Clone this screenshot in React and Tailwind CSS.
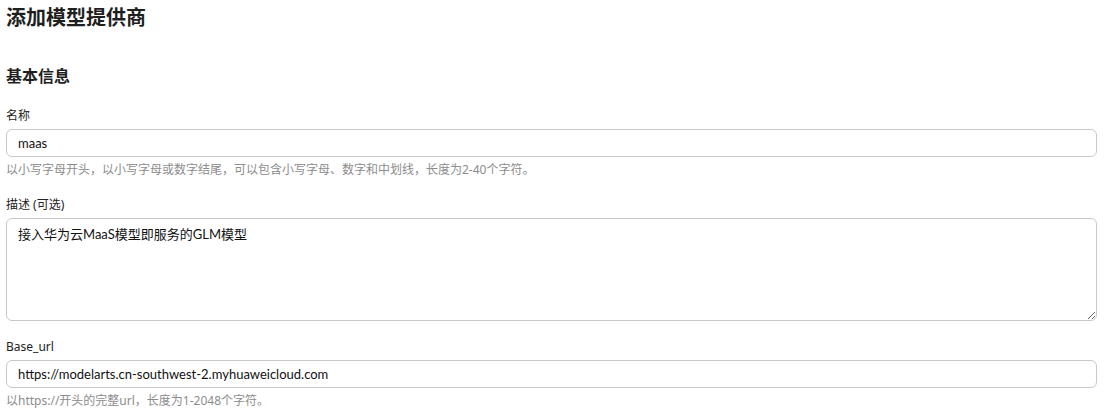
import React from "react";

const font = { fontFamily: '"Noto Sans", "Noto Sans CJK SC", sans-serif' };
const inputFont = { fontFamily: '"Lato", "Noto Sans CJK SC", sans-serif' };

export default function App() {
  return (
    <div className="bg-white w-[1112px] h-[416px] overflow-hidden pl-[6px] pr-[15px] pt-[4px] text-[#222]" style={font}>
      <h2 className="text-[20px] leading-[28px] font-bold text-[#1f1f1f]">添加模型提供商</h2>
      <h3 className="mt-[32px] text-[16px] leading-[24px] font-bold text-[#1f1f1f]">基本信息</h3>
      <div className="mt-[19px] flex flex-col gap-[17px]">
        <div className="flex flex-col">
          <label className="text-[12px] leading-[18px] text-[#222] mb-[4px]">名称</label>
          <input
            defaultValue="maas"
            className="h-[28px] w-full border border-[#c8c8c8] rounded-[6px] px-[11px] text-[13px] text-[#111] outline-none"
            style={inputFont}
          />
          <p className="mt-[4px] text-[12px] leading-[18px] text-[#8c8c8c]">
            以小写字母开头，以小写字母或数字结尾，可以包含小写字母、数字和中划线，长度为2-40个字符。
          </p>
        </div>
        <div className="flex flex-col">
          <label className="text-[12px] leading-[18px] text-[#222] mb-[4px]">描述 (可选)</label>
          <textarea
            defaultValue="接入华为云MaaS模型即服务的GLM模型"
            className="h-[103px] w-full border border-[#c8c8c8] rounded-[6px] px-[11px] py-[5px] text-[13px] leading-[20px] text-[#111] outline-none"
            style={inputFont}
          />
        </div>
        <div className="flex flex-col">
          <label className="text-[12px] leading-[18px] text-[#222] mb-[4px]">Base_url</label>
          <input
            defaultValue="https://modelarts.cn-southwest-2.myhuaweicloud.com"
            className="h-[28px] w-full border border-[#c8c8c8] rounded-[6px] px-[11px] text-[13px] text-[#111] outline-none"
            style={inputFont}
          />
          <p className="mt-[4px] text-[12px] leading-[18px] text-[#8c8c8c]">
            以https://开头的完整url，长度为1-2048个字符。
          </p>
        </div>
      </div>
    </div>
  );
}
